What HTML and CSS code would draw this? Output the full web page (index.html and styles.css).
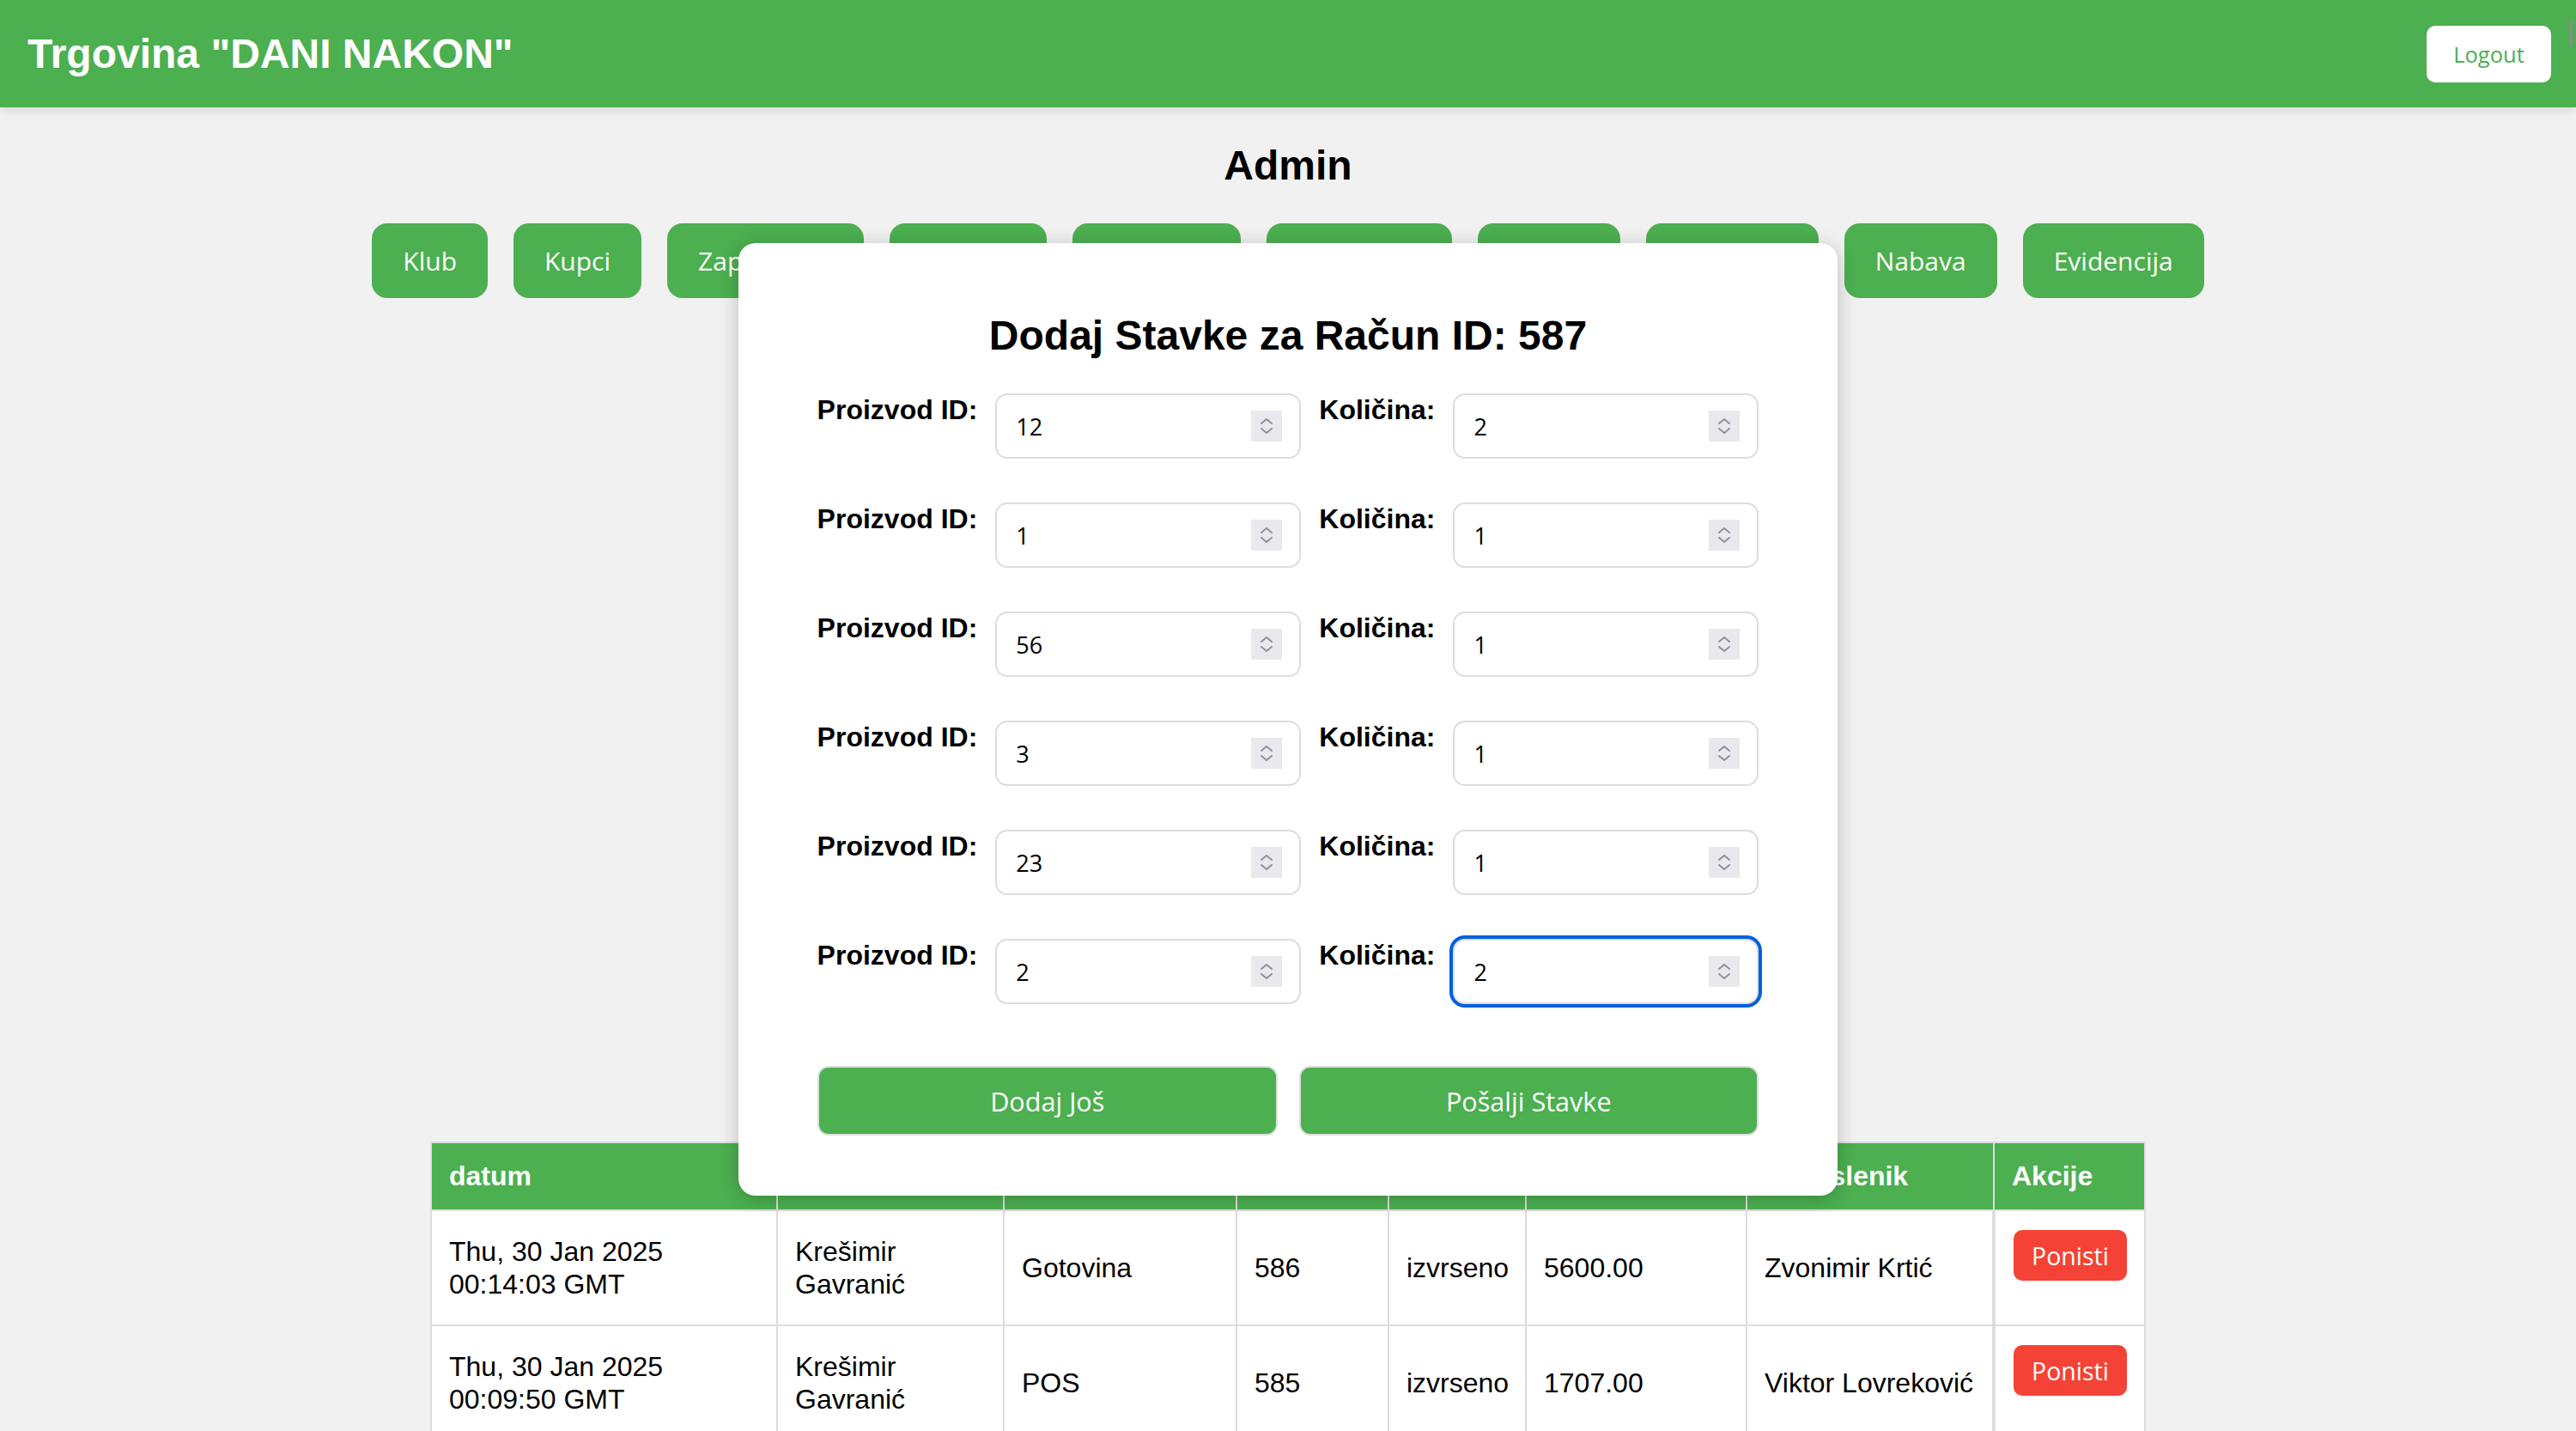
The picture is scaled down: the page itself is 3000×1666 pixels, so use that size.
FILE: index.html
```html
<!DOCTYPE html>
<html lang="hr">
<head>
<meta charset="utf-8">
<title>Trgovina "DANI NAKON"</title>
<link rel="stylesheet" href="styles.css">
</head>
<body>
<header class="topbar">
  <h1 class="brand">Trgovina "DANI NAKON"</h1>
  <button class="logout" type="button">Logout</button>
</header>
<span class="scroll-thumb"></span>

<main class="page">
  <h2 class="page-title">Admin</h2>
  <nav class="nav">
    <button class="nav-btn" type="button">Klub</button>
    <button class="nav-btn" type="button">Kupci</button>
    <button class="nav-btn" type="button">Zaposlenici</button>
    <button class="nav-btn" type="button">Izvještaj</button>
    <button class="nav-btn" type="button">Skladište</button>
    <button class="nav-btn" type="button">Dobavljači</button>
    <button class="nav-btn" type="button">Računi</button>
    <button class="nav-btn" type="button">Proizvodi</button>
    <button class="nav-btn" type="button">Nabava</button>
    <button class="nav-btn" type="button">Evidencija</button>
  </nav>

  <section class="racuni">
    <table class="grid">
      <colgroup>
        <col class="c-datum"><col class="c-kupac"><col class="c-placanje"><col class="c-broj">
        <col class="c-status"><col class="c-iznos"><col class="c-zap"><col class="c-akcije">
      </colgroup>
      <thead>
        <tr>
          <th>datum</th><th>kupac</th><th>plaćanje</th><th>broj</th>
          <th>status</th><th>iznos</th><th>Zaposlenik</th><th>Akcije</th>
        </tr>
      </thead>
      <tbody>
        <tr>
          <td>Thu, 30 Jan 2025 00:14:03 GMT</td>
          <td>Krešimir Gavranić</td>
          <td>Gotovina</td>
          <td>586</td>
          <td>izvrseno</td>
          <td>5600.00</td>
          <td>Zvonimir Krtić</td>
          <td class="akcije"><button class="btn-danger" type="button">Ponisti</button></td>
        </tr>
        <tr>
          <td>Thu, 30 Jan 2025 00:09:50 GMT</td>
          <td>Krešimir Gavranić</td>
          <td>POS</td>
          <td>585</td>
          <td>izvrseno</td>
          <td>1707.00</td>
          <td>Viktor Lovreković</td>
          <td class="akcije"><button class="btn-danger" type="button">Ponisti</button></td>
        </tr>
      </tbody>
    </table>
  </section>
</main>

<div class="modal">
  <h2 class="modal-title">Dodaj Stavke za Račun ID: 587</h2>
  <form class="stavke">
    <div class="row">
      <label class="lbl">Proizvod ID:</label>
      <div class="field"><input class="num" type="text" value="12"><span class="spin"><svg viewBox="0 0 36 36" width="36" height="36"><path d="M12 15 L18 10 L24 15 M12 21 L18 26 L24 21"/></svg></span></div>
      <label class="lbl">Količina:</label>
      <div class="field"><input class="num" type="text" value="2"><span class="spin"><svg viewBox="0 0 36 36" width="36" height="36"><path d="M12 15 L18 10 L24 15 M12 21 L18 26 L24 21"/></svg></span></div>
    </div>
    <div class="row">
      <label class="lbl">Proizvod ID:</label>
      <div class="field"><input class="num" type="text" value="1"><span class="spin"><svg viewBox="0 0 36 36" width="36" height="36"><path d="M12 15 L18 10 L24 15 M12 21 L18 26 L24 21"/></svg></span></div>
      <label class="lbl">Količina:</label>
      <div class="field"><input class="num" type="text" value="1"><span class="spin"><svg viewBox="0 0 36 36" width="36" height="36"><path d="M12 15 L18 10 L24 15 M12 21 L18 26 L24 21"/></svg></span></div>
    </div>
    <div class="row">
      <label class="lbl">Proizvod ID:</label>
      <div class="field"><input class="num" type="text" value="56"><span class="spin"><svg viewBox="0 0 36 36" width="36" height="36"><path d="M12 15 L18 10 L24 15 M12 21 L18 26 L24 21"/></svg></span></div>
      <label class="lbl">Količina:</label>
      <div class="field"><input class="num" type="text" value="1"><span class="spin"><svg viewBox="0 0 36 36" width="36" height="36"><path d="M12 15 L18 10 L24 15 M12 21 L18 26 L24 21"/></svg></span></div>
    </div>
    <div class="row">
      <label class="lbl">Proizvod ID:</label>
      <div class="field"><input class="num" type="text" value="3"><span class="spin"><svg viewBox="0 0 36 36" width="36" height="36"><path d="M12 15 L18 10 L24 15 M12 21 L18 26 L24 21"/></svg></span></div>
      <label class="lbl">Količina:</label>
      <div class="field"><input class="num" type="text" value="1"><span class="spin"><svg viewBox="0 0 36 36" width="36" height="36"><path d="M12 15 L18 10 L24 15 M12 21 L18 26 L24 21"/></svg></span></div>
    </div>
    <div class="row">
      <label class="lbl">Proizvod ID:</label>
      <div class="field"><input class="num" type="text" value="23"><span class="spin"><svg viewBox="0 0 36 36" width="36" height="36"><path d="M12 15 L18 10 L24 15 M12 21 L18 26 L24 21"/></svg></span></div>
      <label class="lbl">Količina:</label>
      <div class="field"><input class="num" type="text" value="1"><span class="spin"><svg viewBox="0 0 36 36" width="36" height="36"><path d="M12 15 L18 10 L24 15 M12 21 L18 26 L24 21"/></svg></span></div>
    </div>
    <div class="row">
      <label class="lbl">Proizvod ID:</label>
      <div class="field"><input class="num" type="text" value="2"><span class="spin"><svg viewBox="0 0 36 36" width="36" height="36"><path d="M12 15 L18 10 L24 15 M12 21 L18 26 L24 21"/></svg></span></div>
      <label class="lbl">Količina:</label>
      <div class="field"><input class="num focused" type="text" value="2"><span class="spin"><svg viewBox="0 0 36 36" width="36" height="36"><path d="M12 15 L18 10 L24 15 M12 21 L18 26 L24 21"/></svg></span></div>
    </div>
    <div class="actions">
      <button class="act" type="button">Dodaj Još</button>
      <button class="act" type="button">Pošalji Stavke</button>
    </div>
  </form>
</div>
</body>
</html>
```

FILE: styles.css
```css
html, body {
  margin: 0;
  padding: 0;
  overflow: hidden;
}

body {
  background: #f1f1f1;
  font-family: "Liberation Sans", Arial, sans-serif;
  color: #000;
}

/* ---------- top bar ---------- */
.topbar {
  height: 125px;
  box-sizing: border-box;
  background: #4caf50;
  display: flex;
  align-items: center;
  justify-content: space-between;
  padding: 0 29px 0 32px;
  box-shadow: 0 4px 10px rgba(0, 0, 0, 0.1);
  position: relative;
  z-index: 1;
}

.brand {
  margin: 0;
  color: #fff;
  font-size: 48px;
  font-weight: bold;
}

.logout {
  width: 145px;
  height: 66px;
  border: none;
  border-radius: 10px;
  background: #fff;
  color: #4caf50;
  font-family: "Open Sans", "Noto Sans", sans-serif;
  font-size: 25.5px;
  padding: 0;
}

.scroll-thumb {
  position: fixed;
  top: 23px;
  right: 4px;
  width: 4px;
  height: 31px;
  border-radius: 2px;
  background: #8a8a8a;
  z-index: 5;
}

/* ---------- page ---------- */
.page-title {
  margin: 40px 0 0;
  text-align: center;
  font-size: 48px;
  font-weight: bold;
}

.nav {
  margin-top: 40px;
  display: flex;
  justify-content: center;
  gap: 30px;
}

.nav-btn {
  height: 87px;
  padding: 0 36px;
  border: none;
  border-radius: 18px;
  background: #4caf50;
  color: #fff;
  font-family: "Open Sans", "Noto Sans", sans-serif;
  font-size: 30px;
}

/* ---------- table ---------- */
.racuni {
  margin-top: 982px;
  display: flex;
  justify-content: center;
}

.grid {
  width: 1996px;
  table-layout: fixed;
  border-collapse: collapse;
  background: #fff;
  border: 2px solid #ddd;
}

.c-datum { width: 403px; }
.c-kupac { width: 264px; }
.c-placanje { width: 271px; }
.c-broj { width: 177px; }
.c-status { width: 160px; }
.c-iznos { width: 257px; }
.c-zap { width: 288px; }
.c-akcije { width: 176px; }

.grid th {
  background: #4caf50;
  color: #fff;
  font-size: 32px;
  font-weight: bold;
  text-align: left;
  padding: 20px 20px;
  border: 2px solid #ddd;
  line-height: 37px;
  white-space: nowrap;
  overflow: hidden;
}

.grid td {
  font-size: 32px;
  line-height: 38px;
  padding: 20px 20px;
  border: 2px solid #ddd;
  vertical-align: middle;
  text-align: left;
}

.grid td.akcije {
  vertical-align: top;
  padding: 22px 20px 51px 21px;
  border-left-width: 4px;
}

.btn-danger {
  display: block;
  height: 59px;
  padding: 0 21px;
  border: none;
  border-radius: 10px;
  background: #f44336;
  color: #fff;
  font-family: "Open Sans", "Noto Sans", sans-serif;
  font-size: 28.5px;
}

/* ---------- modal ---------- */
.modal {
  position: absolute;
  top: 283px;
  left: 50%;
  transform: translateX(-50%);
  width: 1280px;
  box-sizing: border-box;
  padding: 80px 92px 70px;
  background: #fff;
  border-radius: 20px;
  box-shadow: 0 4px 22px rgba(0, 0, 0, 0.22);
  z-index: 10;
}

.modal-title {
  margin: 0 0 40px;
  text-align: center;
  font-size: 48px;
  font-weight: bold;
  line-height: 55px;
}

.stavke {
  display: flex;
  flex-direction: column;
  gap: 51px;
}

.row {
  display: flex;
  align-items: flex-start;
  justify-content: center;
  gap: 21px;
}

.lbl {
  flex-shrink: 0;
  white-space: nowrap;
  font-size: 32px;
  font-weight: bold;
  line-height: 37px;
  padding-top: 1px;
}

.field {
  position: relative;
  flex-shrink: 0;
  width: 356px;
}

.num {
  display: block;
  width: 100%;
  height: 76px;
  box-sizing: border-box;
  border: 2px solid #ddd;
  border-radius: 14px;
  padding: 0 22px;
  background: #fff;
  color: #000;
  font-family: "Open Sans", "Noto Sans", sans-serif;
  font-size: 27px;
  outline: none;
}

.num.focused {
  box-shadow: 0 0 0 4px #0060df;
}

.spin {
  position: absolute;
  right: 22px;
  top: 20px;
  width: 36px;
  height: 36px;
  background: #e9e9ed;
}

.spin svg {
  display: block;
  fill: none;
  stroke: #8f8f9d;
  stroke-width: 2;
  stroke-linecap: round;
  stroke-linejoin: round;
}

.actions {
  margin-top: 21px;
  display: flex;
  gap: 25px;
}

.act {
  flex: 1;
  height: 81px;
  border: 2px solid #ddd;
  border-radius: 13px;
  background: #4caf50;
  color: #fff;
  font-family: "Open Sans", "Noto Sans", sans-serif;
  font-size: 30.6px;
}
```
